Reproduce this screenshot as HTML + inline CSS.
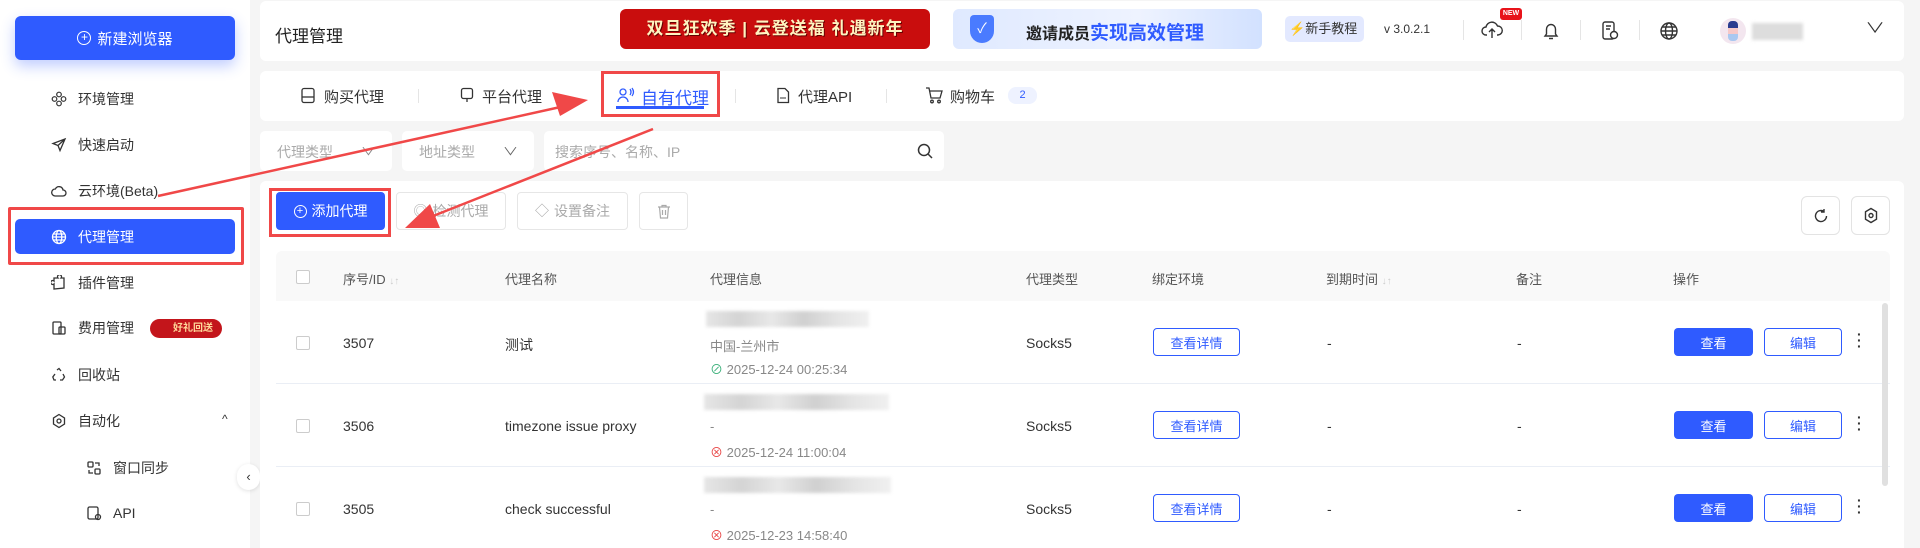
<!DOCTYPE html>
<html style="overflow:hidden;height:548px;background:#f5f5f5"><head><meta charset="utf-8"><style>
*{box-sizing:border-box;margin:0;padding:0}
body{width:1920px;height:548px;overflow:hidden;background:#f5f5f5;font-family:"Liberation Sans","Noto Sans CJK SC",sans-serif;font-size:14px;color:#333;position:relative}
.a{position:absolute}
.side{left:0;top:0;width:250px;height:548px;background:#fff}
.nav{position:absolute;left:78px;font-size:14px;color:#333;line-height:20px}
.ic{position:absolute;width:16px;height:16px}
.card{background:#fff;border-radius:6px;position:absolute}
.blue{color:#2f5bff}
.btn{position:absolute;border-radius:4px;font-size:14px;display:flex;align-items:center;justify-content:center}
.th{position:absolute;top:269px;font-size:13px;color:#555}
.cb{position:absolute;width:14px;height:14px;border:1px solid #ccc;border-radius:2px;background:#fff}
.td{position:absolute;font-size:14px;color:#333}
.blur{position:absolute;height:16px;background:linear-gradient(90deg,#e6e6e6,#d4d4d4 20%,#e8e8e8 40%,#d0d0d0 60%,#e4e4e4 80%,#f0f0f0);filter:blur(1.5px)}
.sep{position:absolute;width:1px;background:#e5e5e5}
</style></head><body>
<div class="a side"></div>
<div class="btn" style="left:15px;top:16px;width:220px;height:44px;background:#2f5bff;color:#fff;font-size:15px;border-radius:6px;box-shadow:0 6px 14px rgba(47,91,255,.3)"><span style="display:inline-block;width:14px;height:14px;border:1.5px solid #fff;border-radius:50%;margin-right:6px;font-size:12px;line-height:11px;text-align:center">+</span>新建浏览器</div>

<svg class="ic" style="left:51px;top:91px" viewBox="0 0 16 16" fill="none" stroke="#333" stroke-width="1.2"><circle cx="8" cy="3.5" r="2.3"/><circle cx="8" cy="12.5" r="2.3"/><circle cx="3.5" cy="8" r="2.3"/><circle cx="12.5" cy="8" r="2.3"/></svg>
<div class="nav" style="top:89px">环境管理</div>
<svg class="ic" style="left:51px;top:137px" viewBox="0 0 16 16" fill="none" stroke="#333" stroke-width="1.3"><path d="M14 2L2 6.5l5 2 2 5z M7 8.5L14 2"/></svg>
<div class="nav" style="top:135px">快速启动</div>
<svg class="ic" style="left:51px;top:183px" viewBox="0 0 16 16" fill="none" stroke="#333" stroke-width="1.3"><path d="M4 13h8a3 3 0 0 0 0-6 4 4 0 0 0-7.6-1A3.5 3.5 0 0 0 4 13z"/></svg>
<div class="nav" style="top:181px">云环境(Beta)</div>
<div class="a" style="left:15px;top:219px;width:220px;height:35px;background:#2f5bff;border-radius:5px"></div>
<svg class="ic" style="left:51px;top:229px" viewBox="0 0 16 16" fill="none" stroke="#fff" stroke-width="1.3"><circle cx="8" cy="8" r="6.5"/><ellipse cx="8" cy="8" rx="2.8" ry="6.5"/><path d="M1.5 8h13M2.5 5h11M2.5 11h11"/></svg>
<div class="nav" style="top:227px;color:#fff">代理管理</div>
<div class="a" style="left:8px;top:207px;width:236px;height:58px;border:3px solid #f04848;border-radius:2px"></div>
<svg class="ic" style="left:51px;top:275px" viewBox="0 0 16 16" fill="none" stroke="#333" stroke-width="1.3"><path d="M3 14V9a2 2 0 1 1 0-3V3h4a2 2 0 1 1 3 0h3v10z"/></svg>
<div class="nav" style="top:273px">插件管理</div>
<svg class="ic" style="left:51px;top:320px" viewBox="0 0 16 16" fill="none" stroke="#333" stroke-width="1.3"><rect x="2" y="2" width="8" height="12" rx="1"/><rect x="8" y="7" width="6" height="7" rx="1"/></svg>
<div class="nav" style="top:318px">费用管理</div>
<div class="a" style="left:150px;top:319px;width:72px;height:19px;background:#c3151b;border-radius:10px;color:#ffd89a;font-size:10px;font-weight:bold;line-height:19px;text-align:right;padding-right:9px">好礼回送</div>
<svg class="ic" style="left:51px;top:367px" viewBox="0 0 16 16" fill="none" stroke="#333" stroke-width="1.3"><path d="M6 3l2-1.5L10 4M12 7l1.5 3-2 3H9M5 13H3L1.8 10 4 7"/></svg>
<div class="nav" style="top:365px">回收站</div>
<svg class="ic" style="left:51px;top:413px" viewBox="0 0 16 16" fill="none" stroke="#333" stroke-width="1.3"><path d="M8 1.5l5.5 3.5v6L8 14.5 2.5 11V5z"/><circle cx="8" cy="8" r="2"/></svg>
<div class="nav" style="top:411px">自动化</div>
<div class="a" style="left:222px;top:412px;font-size:12px;color:#333">^</div>
<svg class="ic" style="left:86px;top:460px" viewBox="0 0 16 16" fill="none" stroke="#333" stroke-width="1.3"><rect x="2" y="2" width="5" height="5" rx="1"/><rect x="9" y="9" width="5" height="5" rx="1"/><path d="M9 3h4v3M7 13H3v-3"/></svg>
<div class="nav" style="left:113px;top:458px">窗口同步</div>
<svg class="ic" style="left:86px;top:505px" viewBox="0 0 16 16" fill="none" stroke="#333" stroke-width="1.3"><rect x="2" y="2" width="10" height="12" rx="1.5"/><circle cx="12" cy="12" r="2.5"/></svg>
<div class="nav" style="left:113px;top:503px">API</div>
<div class="a" style="left:237px;top:464px;width:23px;height:26px;background:#fff;border-radius:12px;box-shadow:0 1px 4px rgba(0,0,0,.12);font-size:13px;text-align:center;line-height:26px;color:#333">‹</div>

<!-- header -->
<div class="card" style="left:260px;top:1px;width:1644px;height:60px"></div>
<div class="a" style="left:275px;top:22px;font-size:17px;color:#222">代理管理</div>
<div class="a" style="left:620px;top:9px;width:310px;height:40px;background:#c90d0d;border-radius:6px;color:#fff3c0;font-weight:bold;font-size:17px;text-align:center;line-height:40px;letter-spacing:1px;text-shadow:1px 1px 0 #600">双旦狂欢季 | 云登送福 礼遇新年</div>
<div class="a" style="left:953px;top:9px;width:309px;height:40px;background:linear-gradient(90deg,#dfe9ff,#eef3ff 60%,#d2e1ff);border-radius:6px"></div>
<div class="a" style="left:970px;top:15px;width:24px;height:28px;background:#4a7bff;border-radius:4px 4px 12px 12px;color:#fff;text-align:center;line-height:26px;font-size:14px">✓</div>
<div class="a" style="left:1026px;top:18px;font-size:16px;font-weight:bold;color:#222">邀请成员<span style="color:#2f5bff;font-size:19px">实现高效管理</span></div>
<div class="a" style="left:1285px;top:16px;width:79px;height:26px;background:#e3e9ff;border-radius:5px;font-size:13px;color:#333;line-height:26px;padding-left:4px"><span style="color:#2f5bff">⚡</span>新手教程</div>
<div class="a" style="left:1384px;top:22px;font-size:12px;color:#333">v 3.0.2.1</div>
<div class="sep" style="left:1463px;top:20px;height:20px"></div>
<svg class="a" style="left:1481px;top:20px" width="22" height="20" viewBox="0 0 22 20" fill="none" stroke="#333" stroke-width="1.4"><path d="M6 15H5a4 4 0 0 1 0-8 6 6 0 0 1 11.5-1A4.5 4.5 0 0 1 17 15h-1M11 18V9M8 12l3-3 3 3"/></svg>
<div class="a" style="left:1500px;top:8px;width:22px;height:12px;background:#e8131a;border-radius:3px;color:#fff;font-size:7px;font-weight:bold;text-align:center;line-height:12px">NEW</div>
<div class="sep" style="left:1521px;top:20px;height:20px"></div>
<svg class="a" style="left:1541px;top:21px" width="20" height="20" viewBox="0 0 20 20" fill="none" stroke="#333" stroke-width="1.4"><path d="M4 15h12l-1.5-2V8a4.5 4.5 0 0 0-9 0v5zM8 17.5h4"/></svg>
<div class="sep" style="left:1580px;top:20px;height:20px"></div>
<svg class="a" style="left:1600px;top:20px" width="20" height="22" viewBox="0 0 20 22" fill="none" stroke="#333" stroke-width="1.4"><rect x="3" y="2" width="11" height="17" rx="2"/><path d="M6 6h5M6 9h4"/><circle cx="14" cy="15" r="3.5" fill="#fff"/></svg>
<div class="sep" style="left:1639px;top:20px;height:20px"></div>
<svg class="a" style="left:1659px;top:21px" width="20" height="20" viewBox="0 0 20 20" fill="none" stroke="#333" stroke-width="1.4"><circle cx="10" cy="10" r="8"/><ellipse cx="10" cy="10" rx="3.5" ry="8"/><path d="M2 10h16M3 6h14M3 14h14"/></svg>
<div class="a" style="left:1720px;top:18px;width:26px;height:26px;border-radius:50%;background:#f3e6ef"></div>
<div class="a" style="left:1728px;top:21px;width:10px;height:20px;background:linear-gradient(#2a3b8f 35%,#f7c8c8 35% 65%,#aac8f0 65%);border-radius:4px"></div>
<div class="a" style="left:1752px;top:23px;width:51px;height:17px;background:#ddd;filter:blur(1.5px)"></div>
<div class="a" style="left:1868px;top:18px;font-size:14px;color:#333;transform:scaleX(1.4)">∨</div>

<!-- tabs -->
<div class="card" style="left:260px;top:71px;width:1644px;height:50px"></div>
<svg class="a" style="left:300px;top:87px" width="16" height="17" viewBox="0 0 16 17" fill="none" stroke="#333" stroke-width="1.3"><rect x="2" y="1.5" width="12" height="14" rx="2"/><path d="M2 10h12"/></svg>
<div class="a" style="left:324px;top:86px;font-size:15px">购买代理</div>
<div class="sep" style="left:418px;top:89px;height:14px"></div>
<svg class="a" style="left:460px;top:87px" width="14" height="17" viewBox="0 0 14 17" fill="none" stroke="#333" stroke-width="1.3"><rect x="1.5" y="1.5" width="11" height="10" rx="2"/><path d="M7 12v3"/></svg>
<div class="a" style="left:482px;top:86px;font-size:15px">平台代理</div>
<svg class="a" style="left:617px;top:87px" width="18" height="16" viewBox="0 0 18 16" fill="none" stroke="#2f5bff" stroke-width="1.3"><circle cx="6" cy="5" r="3"/><path d="M1 15a5 5 0 0 1 10 0M13 2q2 3 0 6M15 1q3 4 0 8"/></svg>
<div class="a blue" style="left:641px;top:84px;font-size:17px">自有代理</div>
<div class="a" style="left:616px;top:106px;width:88px;height:3px;background:#2f5bff"></div>
<div class="a" style="left:601px;top:71px;width:119px;height:46px;border:3px solid #f04848"></div>
<div class="sep" style="left:735px;top:89px;height:14px"></div>
<svg class="a" style="left:776px;top:87px" width="14" height="17" viewBox="0 0 14 17" fill="none" stroke="#333" stroke-width="1.3"><path d="M2 1.5h7l3.5 3.5v10.5H2z"/><path d="M4 11h6" stroke-width="1"/></svg>
<div class="a" style="left:798px;top:86px;font-size:15px">代理API</div>
<div class="sep" style="left:886px;top:89px;height:14px"></div>
<svg class="a" style="left:925px;top:86px" width="18" height="18" viewBox="0 0 18 18" fill="none" stroke="#333" stroke-width="1.3"><path d="M1 2h3l2 10h9l2-7H5"/><circle cx="7" cy="15.5" r="1.3"/><circle cx="14" cy="15.5" r="1.3"/></svg>
<div class="a" style="left:950px;top:86px;font-size:15px">购物车</div>
<div class="a" style="left:1008px;top:87px;width:29px;height:17px;background:#eef2ff;border-radius:8px;color:#2f5bff;font-size:11px;text-align:center;line-height:17px">2</div>

<!-- filters -->
<div class="card" style="left:260px;top:131px;width:132px;height:40px;border-radius:5px"></div>
<div class="a" style="left:277px;top:142px;color:#aaa;font-size:14px">代理类型</div>
<div class="a" style="left:363px;top:143px;color:#888;font-size:11px;transform:scaleX(1.4)">∨</div>
<div class="card" style="left:402px;top:131px;width:132px;height:40px;border-radius:5px"></div>
<div class="a" style="left:419px;top:142px;color:#aaa;font-size:14px">地址类型</div>
<div class="a" style="left:505px;top:143px;color:#666;font-size:11px;transform:scaleX(1.4)">∨</div>
<div class="card" style="left:544px;top:131px;width:400px;height:40px;border-radius:5px"></div>
<div class="a" style="left:555px;top:142px;color:#aaa;font-size:14px">搜索序号、名称、IP</div>
<svg class="a" style="left:917px;top:143px" width="16" height="16" viewBox="0 0 16 16" fill="none" stroke="#333" stroke-width="1.5"><circle cx="7" cy="7" r="5.5"/><path d="M11 11l4 4"/></svg>

<!-- table card -->
<div class="card" style="left:260px;top:181px;width:1644px;height:367px;border-radius:6px 6px 0 0"></div>
<div class="btn" style="left:276px;top:192px;width:109px;height:38px;background:#2f5bff;color:#fff"><span style="display:inline-block;width:13px;height:13px;border:1.3px solid #fff;border-radius:50%;margin-right:5px;font-size:11px;line-height:10px;text-align:center">+</span>添加代理</div>
<div class="a" style="left:269px;top:188px;width:122px;height:49px;border:3px solid #f04848"></div>
<div class="btn" style="left:396px;top:192px;width:110px;height:38px;border:1px solid #e6e6e6;color:#aaa"><span style="margin-right:5px">◎</span>检测代理</div>
<div class="btn" style="left:517px;top:192px;width:111px;height:38px;border:1px solid #e6e6e6;color:#aaa"><span style="margin-right:5px">◇</span>设置备注</div>
<div class="btn" style="left:639px;top:192px;width:49px;height:38px;border:1px solid #e6e6e6;color:#aaa">
<svg width="14" height="15" viewBox="0 0 14 15" fill="none" stroke="#aaa" stroke-width="1.2"><path d="M1 3h12M5 3V1.5h4V3M2.5 3l1 11h7l1-11M5.5 6v5M8.5 6v5"/></svg></div>
<div class="btn" style="left:1801px;top:196px;width:39px;height:39px;border:1px solid #e3e3e3;border-radius:6px">
<svg width="16" height="16" viewBox="0 0 16 16" fill="none" stroke="#333" stroke-width="1.4"><path d="M13.5 8A5.5 5.5 0 1 1 11 3.4M11 1v3h-3"/></svg></div>
<div class="btn" style="left:1851px;top:196px;width:39px;height:39px;border:1px solid #e3e3e3;border-radius:6px">
<svg width="16" height="17" viewBox="0 0 16 17" fill="none" stroke="#333" stroke-width="1.4"><path d="M8 1.5l5.5 3.3v7.4L8 15.5l-5.5-3.3V4.8z"/><circle cx="8" cy="8.5" r="2"/></svg></div>

<div class="a" style="left:276px;top:251px;width:1614px;height:50px;background:#f9f9f9;border-radius:6px 6px 0 0"></div>
<div class="cb" style="left:296px;top:270px"></div>
<div class="th" style="left:343px">序号/ID <span style="color:#ccc;font-size:10px">↓↑</span></div>
<div class="th" style="left:505px">代理名称</div>
<div class="th" style="left:710px">代理信息</div>
<div class="th" style="left:1026px">代理类型</div>
<div class="th" style="left:1152px">绑定环境</div>
<div class="th" style="left:1326px">到期时间 <span style="color:#ccc;font-size:10px">↓↑</span></div>
<div class="th" style="left:1516px">备注</div>
<div class="th" style="left:1673px">操作</div>

<div class="a" style="left:276px;top:383px;width:1614px;height:1px;background:#eaeef5"></div>
<div class="a" style="left:276px;top:466px;width:1614px;height:1px;background:#eaeef5"></div>
<div class="a" style="left:1882px;top:303px;width:6px;height:183px;background:#e0e0e0;border-radius:3px"></div>

<!-- row 1 -->
<div class="cb" style="left:296px;top:336px"></div>
<div class="td" style="left:343px;top:335px">3507</div>
<div class="td" style="left:505px;top:335px">测试</div>
<div class="blur" style="left:706px;top:311px;width:163px"></div>
<div class="td" style="left:710px;top:336px;color:#888;font-size:13px">中国-兰州市</div>
<div class="td" style="left:710px;top:359px;color:#888;font-size:13px"><span style="color:#3bb07a">⊘</span> 2025-12-24 00:25:34</div>
<div class="td" style="left:1026px;top:335px">Socks5</div>
<div class="btn" style="left:1153px;top:328px;width:87px;height:28px;border:1px solid #2f5bff;color:#2f5bff;font-size:13px">查看详情</div>
<div class="td" style="left:1327px;top:335px">-</div>
<div class="td" style="left:1517px;top:335px">-</div>
<div class="btn" style="left:1674px;top:328px;width:79px;height:28px;background:#2f5bff;color:#fff;font-size:13px">查看</div>
<div class="btn" style="left:1764px;top:328px;width:78px;height:28px;border:1px solid #2f5bff;color:#2f5bff;font-size:13px">编辑</div>
<div class="td" style="left:1857px;top:331px;font-weight:bold;line-height:6px;font-size:14px">·<br>·<br>·</div>

<!-- row 2 -->
<div class="cb" style="left:296px;top:419px"></div>
<div class="td" style="left:343px;top:418px">3506</div>
<div class="td" style="left:505px;top:418px">timezone issue proxy</div>
<div class="blur" style="left:704px;top:394px;width:185px"></div>
<div class="td" style="left:710px;top:419px;color:#888;font-size:13px">-</div>
<div class="td" style="left:710px;top:442px;color:#888;font-size:13px"><span style="color:#e84848">⊗</span> 2025-12-24 11:00:04</div>
<div class="td" style="left:1026px;top:418px">Socks5</div>
<div class="btn" style="left:1153px;top:411px;width:87px;height:28px;border:1px solid #2f5bff;color:#2f5bff;font-size:13px">查看详情</div>
<div class="td" style="left:1327px;top:418px">-</div>
<div class="td" style="left:1517px;top:418px">-</div>
<div class="btn" style="left:1674px;top:411px;width:79px;height:28px;background:#2f5bff;color:#fff;font-size:13px">查看</div>
<div class="btn" style="left:1764px;top:411px;width:78px;height:28px;border:1px solid #2f5bff;color:#2f5bff;font-size:13px">编辑</div>
<div class="td" style="left:1857px;top:414px;font-weight:bold;line-height:6px;font-size:14px">·<br>·<br>·</div>

<!-- row 3 -->
<div class="cb" style="left:296px;top:502px"></div>
<div class="td" style="left:343px;top:501px">3505</div>
<div class="td" style="left:505px;top:501px">check successful</div>
<div class="blur" style="left:704px;top:477px;width:187px"></div>
<div class="td" style="left:710px;top:502px;color:#888;font-size:13px">-</div>
<div class="td" style="left:710px;top:525px;color:#888;font-size:13px"><span style="color:#e84848">⊗</span> 2025-12-23 14:58:40</div>
<div class="td" style="left:1026px;top:501px">Socks5</div>
<div class="btn" style="left:1153px;top:494px;width:87px;height:28px;border:1px solid #2f5bff;color:#2f5bff;font-size:13px">查看详情</div>
<div class="td" style="left:1327px;top:501px">-</div>
<div class="td" style="left:1517px;top:501px">-</div>
<div class="btn" style="left:1674px;top:494px;width:79px;height:28px;background:#2f5bff;color:#fff;font-size:13px">查看</div>
<div class="btn" style="left:1764px;top:494px;width:78px;height:28px;border:1px solid #2f5bff;color:#2f5bff;font-size:13px">编辑</div>
<div class="td" style="left:1857px;top:497px;font-weight:bold;line-height:6px;font-size:14px">·<br>·<br>·</div>

<!-- arrows -->
<svg class="a" style="left:0;top:0" width="1920" height="548">
<g stroke="#f04848" stroke-width="2.5" fill="#f04848">
<line x1="158" y1="196" x2="565" y2="106"/>
<polygon points="588,100 552,92 560,116" stroke="none"/>
<line x1="653" y1="129" x2="428" y2="218"/>
<polygon points="405,228 430,204 440,228" stroke="none"/>
</g></svg>
</body></html>
